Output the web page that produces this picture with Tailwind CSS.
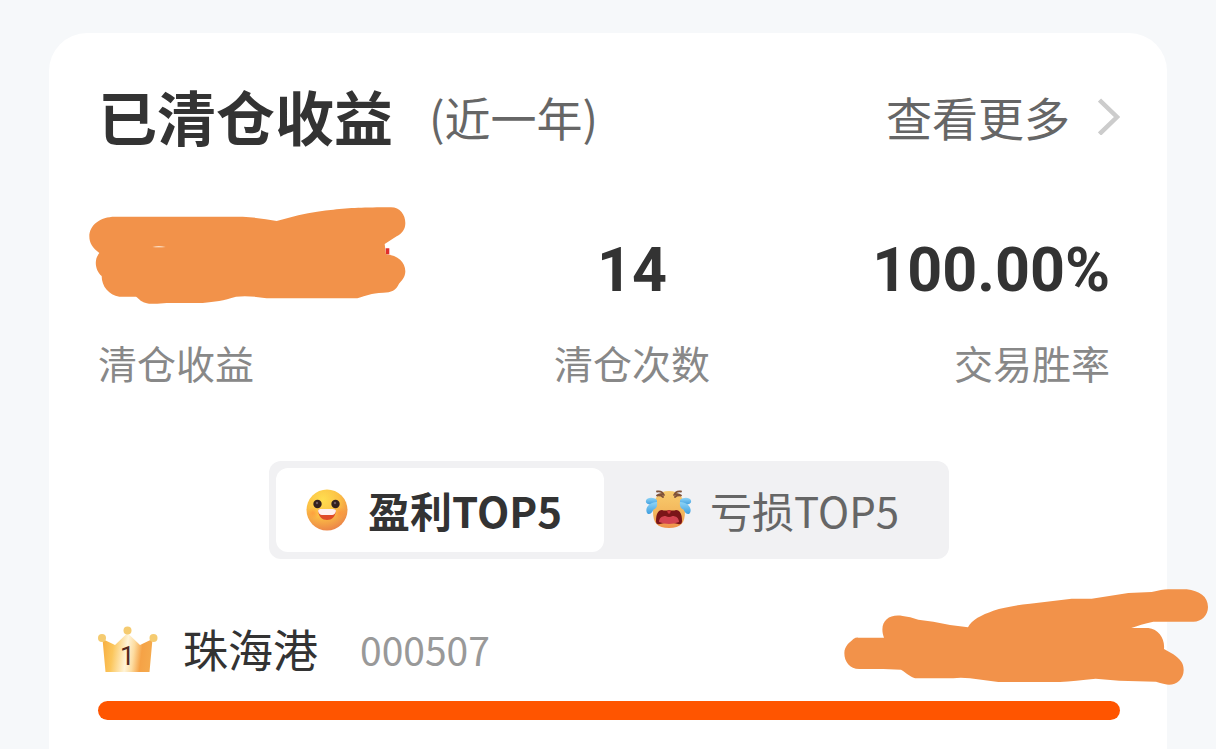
<!DOCTYPE html>
<html lang="zh-CN">
<head>
  <meta charset="UTF-8" />
  <meta name="viewport" content="width=device-width, initial-scale=1.0" />
  <title>已清仓收益</title>
  <script src="https://cdn.jsdelivr.net/npm/@tailwindcss/browser@4"></script>
</head>
<body class="min-h-screen flex flex-col bg-[#f6f8fa] px-[49px] pt-[33px] font-['Noto_Sans_CJK_SC',sans-serif] text-[#333] overflow-hidden">

  <main class="flex-1 rounded-t-[38px] bg-white pr-[47px] pl-[49px] pt-[51px]">

    <!-- Header -->
    <header class="flex items-center justify-between">
      <div class="flex items-center gap-9">
        <h1 class="text-[59px] leading-[64px] font-bold">已清仓收益</h1>
        <span class="text-[46px] leading-[64px] text-[#666]">(近一年)</span>
      </div>
      <a href="#" class="flex items-center gap-7 text-[46px] leading-[64px] text-[#666]">
        查看更多
        <svg class="h-[38px] w-[22px]" viewBox="0 0 22 38" fill="none" stroke="#ccc" stroke-width="4.5" aria-hidden="true">
          <path d="M1.5 3L19 20L1.5 37" />
        </svg>
      </a>
    </header>

    <!-- Stats -->
    <dl class="mt-[90px] flex justify-between pr-[10px] text-[61px]">
      <div class="relative flex w-[294px] flex-col">
        <dt class="order-2 mt-9 text-[39px] leading-[48px] text-[#888]">清仓收益</dt>
        <dd class="h-[64px]">
          <svg class="absolute -top-[31px] -left-[9px] h-[97px] w-[317px] max-w-none" viewBox="27 50 951 291" role="img" aria-label="已隐藏">
            <path fill="#f2924a" d="M105 79H488Q545 83 590 92L655 75Q715 61 760 58C810 53 850 51 933 51C960 51 976 74 976 98C976 118 966 129 950 138L914 161L918 192C954 195 976 216 976 243C976 260 965 272 957 280C948 300 934 306 910 307C870 309 862 315 832 324H560Q510 315 468 319C430 331 405 334 368 338H260C235 341 208 342 195 337C182 333 178 326 168 319H118C86 314 65 288 65 257C48 243 39 211 58 188C38 173 28 158 28 138C28 105 60 79 105 79Z" />
            <path fill="#fff6ea" d="M217 170Q236 166 257 170Q236 172 217 170Z" />
            <path fill="#e02f2c" d="M917 174H928V192H918Z" />
          </svg>
        </dd>
      </div>
      <div class="flex flex-col items-center">
        <dt class="order-2 mt-9 text-[39px] leading-[48px] text-[#888]">清仓次数</dt>
        <dd class="font-[Roboto] leading-[64px] font-bold">14</dd>
      </div>
      <div class="flex flex-col items-end">
        <dt class="order-2 mt-9 text-[39px] leading-[48px] text-[#888]">交易胜率</dt>
        <dd class="font-[Roboto] leading-[64px] font-bold">100.00%</dd>
      </div>
    </dl>

    <!-- Tabs -->
    <div class="mx-auto mt-[75px] flex h-[98px] w-[680px] rounded-xl bg-[#f1f1f3] p-[7px] text-[42px]" role="tablist">
      <button type="button" role="tab" aria-selected="true" class="flex w-[328px] items-center gap-5 rounded-xl bg-white pl-[30px] font-bold">
        <svg class="size-[42px] shrink-0" viewBox="0 0 42 42" aria-hidden="true">
          <defs>
            <radialGradient id="smile" cx=".4" cy=".25" r=".8">
              <stop offset="0" stop-color="#ffde50" />
              <stop offset=".5" stop-color="#fcc145" />
              <stop offset="1" stop-color="#ea7f48" />
            </radialGradient>
            <radialGradient id="blush">
              <stop offset="0" stop-color="#ff8a3a" stop-opacity=".6" />
              <stop offset="1" stop-color="#ff8a3a" stop-opacity="0" />
            </radialGradient>
          </defs>
          <circle cx="21" cy="21" r="20.5" fill="url(#smile)" />
          <circle cx="7" cy="24" r="6" fill="url(#blush)" />
          <circle cx="34" cy="24" r="6" fill="url(#blush)" />
          <circle cx="11.500" cy="15" r="4.200" fill="#33211f" />
          <circle cx="29.500" cy="15" r="4.200" fill="#33211f" />
          <circle cx="11" cy="14" r="1.200" fill="#6b5860" />
          <circle cx="29" cy="14" r="1.200" fill="#6b5860" />
          <path fill="#df4a28" d="M12 22Q12 20 14 20H27Q30 20 30 22C29 28 26 31 21 31S13 28 12 22Z" />
          <path fill="#fff0f0" d="M12 22Q12 20 14 20H27Q30 20 30 22Q29 26 26 26H16Q13 26 12 22Z" />
        </svg>
        <span class="pb-[2px]">盈利TOP5</span>
      </button>
      <button type="button" role="tab" aria-selected="false" class="flex flex-1 items-center gap-[18px] pl-[41px] text-[#666]">
        <svg class="h-[40px] w-[47px] shrink-0" viewBox="0 0 47 40" aria-hidden="true">
          <defs>
            <linearGradient id="cry" x2="0" y2="1">
              <stop offset="0" stop-color="#f8cc6e" />
              <stop offset=".6" stop-color="#f3b65b" />
              <stop offset="1" stop-color="#ef9149" />
            </linearGradient>
            <linearGradient id="tear" x2="0" y2="1">
              <stop offset="0" stop-color="#8fd4f5" />
              <stop offset="1" stop-color="#3f9fe0" />
            </linearGradient>
          </defs>
          <path fill="url(#cry)" d="M24 1C35 1 40 9 40 21S36 38 24 38S8 33 8 21S13 1 24 1Z" />
          <path fill="none" stroke="#80533a" stroke-width="1.800" stroke-linecap="round" stroke-linejoin="round" d="M12 1.500Q17 .5 19 5Q15 3 12 5.500Q16 5 18 7M36 1.500Q31 .5 29 5Q33 3 36 5.500Q32 5 30 7" />
          <g fill="url(#tear)">
            <path d="M12 10C9 7 2 7 1 10.500S5 15 8 14.500L12 14Z" />
            <path d="M12 12C5 12 .5 17 1.500 21.500S7 24 8.500 19.500Q13 18 12 12Z" />
            <path d="M35 10C38 7 45 7 46 10.500S42 15 39 14.500L35 14Z" />
            <path d="M35 12C42 12 46.500 17 45.500 21.500S40 24 38.500 19.500Q34 18 35 12Z" />
          </g>
          <path fill="#7a1518" d="M11 31C11 24 13 20 17 20Q20 21 24 20Q28 21 31 20C35 20 37 24 37 31Q37 35 33 34Q24 31 15 34Q11 35 11 31Z" />
          <path fill="#d34350" d="M14 32C14 28 17 26 20.500 26Q24 28 27.500 26C31 26 34 28 34 32Q24 36 14 32Z" />
          <path fill="#c8363a" d="M22 20.500H26L25 23.500H23Z" />
        </svg>
        <span class="pb-[2px]">亏损TOP5</span>
      </button>
    </div>

    <!-- Ranking -->
    <ol class="mt-[60px]">
      <li class="relative">
        <div class="flex h-[60px] items-center">
          <svg class="h-[46px] w-[60px]" viewBox="0 0 60 46" aria-label="1">
            <defs>
              <linearGradient id="crown" x1="0" x2="1" y1=".45" y2=".55">
                <stop offset="0" stop-color="#f8b043" />
                <stop offset=".2" stop-color="#fbc65c" />
                <stop offset=".48" stop-color="#fff4d8" />
                <stop offset=".62" stop-color="#fddca0" />
                <stop offset=".78" stop-color="#f5a246" />
                <stop offset="1" stop-color="#f5ab4e" />
              </linearGradient>
            </defs>
            <path fill="url(#crown)" d="M4.500 13L17 19L29.500 7L42 19L54.500 13L51.500 46H7.500Z" />
            <g fill="#f5cb70">
              <circle cx="4" cy="12" r="4" />
              <circle cx="29.500" cy="4.500" r="4" />
              <circle cx="55.500" cy="12" r="4" />
            </g>
            <text x="22" y="39" font-size="26" font-family="Roboto" fill="#54291b">1</text>
          </svg>
          <span class="ml-[25px] text-[45px] leading-[60px]">珠海港</span>
          <span class="ml-[42px] text-[39px] leading-[60px] text-[#999]">000507</span>
        </div>
        <svg class="absolute -top-[30px] -right-[88px] h-[96px] w-[364px] max-w-none" viewBox="42 25 1092 288" role="img" aria-label="已隐藏">
          <path fill="#f2924a" d="M85 171H162C145 125 175 98 218 106Q240 108 265 117L310 123L360 133L414 140C424 117 455 103 490 90Q535 76 600 69L725 54H785L895 37L965 34Q995 27 1015 26H1070C1108 31 1134 47 1134 79C1134 104 1115 123 1090 123H970Q930 132 904 142H955C986 146 1005 173 1002 205L1030 221C1050 236 1061 246 1061 268C1061 300 1031 319 1003 310Q990 307 978 303L868 300L797 294Q735 301 690 304H505L420 293Q390 290 370 293H262C244 293 230 277 213 267L160 265H88C59 265 43 243 43 217C43 195 61 184 70 175Q78 170 85 171Z" />
        </svg>
        <div class="mt-[22px] h-[19px] rounded-full bg-[#ff5500]"></div>
      </li>
    </ol>
  </main>

</body>
</html>
